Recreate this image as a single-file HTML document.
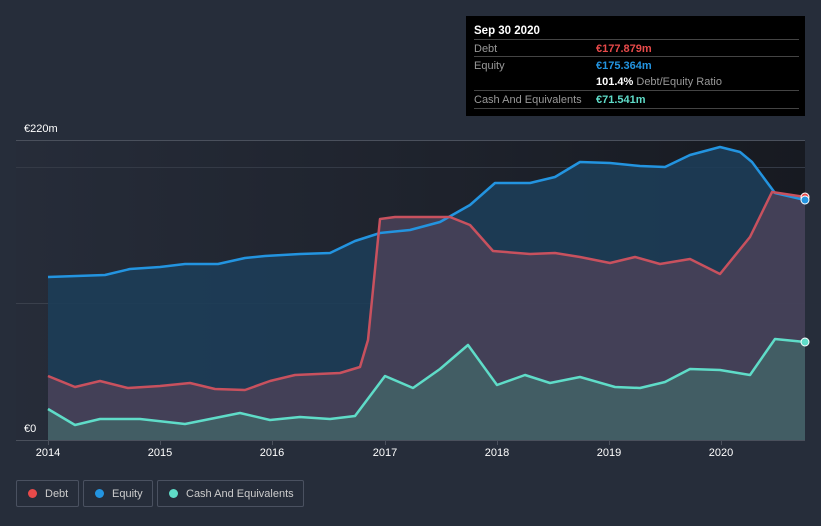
<!DOCTYPE html>
<html><head><meta charset="utf-8"><style>
html,body{margin:0;width:821px;height:526px;overflow:hidden}
body{background:#262d3a;font-family:"Liberation Sans",sans-serif;position:relative}
.tt{position:absolute;left:466px;top:16px;width:339px;height:100px;background:#000;color:#fff;font-size:11px}
.tt .h{position:absolute;left:8px;top:9px;font-weight:bold;font-size:11.5px}
.row{position:absolute;left:8px;width:325px;height:17px;border-top:1px solid #444}
.row span{position:absolute;top:3px;white-space:nowrap}
.lab{left:0;color:#999}
.val{left:122px;font-weight:bold}
.leg{position:absolute;top:480px;height:27px;border:1px solid #4a5160;border-radius:2px;color:#ccc;font-size:11px;line-height:26px;box-sizing:border-box;white-space:nowrap}
.leg i{position:absolute;left:11px;top:8px;width:9px;height:9px;border-radius:50%}
.leg span{position:absolute;left:28px}
.yr{position:absolute;top:447px;color:#fff;font-size:11px;transform:translateX(-50%)}
</style></head><body>
<svg width="821" height="526" style="position:absolute;left:0;top:0">
<defs>
<linearGradient id="bg" x1="0" x2="1" y1="0" y2="0"><stop offset="0" stop-color="#262c39"/><stop offset="1" stop-color="#171a21"/></linearGradient>
</defs>
<rect x="16" y="140" width="789" height="300" fill="url(#bg)"/>
<line x1="16" y1="140.5" x2="805" y2="140.5" stroke="#4a505c"/>
<line x1="16" y1="167.5" x2="805" y2="167.5" stroke="#343a46"/>
<line x1="16" y1="303.5" x2="805" y2="303.5" stroke="#3a404c"/>
<line x1="16" y1="440.5" x2="805" y2="440.5" stroke="#4a505c"/>
<polygon fill="#1d3d58" opacity="0.9" points="48,277 105,275 130,269 160,267 185,264 218,264 245,258 265,256 300,254 330,253 355,241 380,233 410,230 440,222 470,205 495,183 530,183 555,177 580,162 610,163 640,166 665,167 690,155 720,147 740,152 752,162 775,193 805,200 805,440 48,440"/>
<polygon fill="#4a4258" opacity="0.85" points="48,376 75,387 100,381 128,388 160,386 190,383 215,389 245,390 270,381 295,375 340,373 360,367 368,340 380,219 395,217 450,217 470,225 493,251 530,254 555,253 580,257 610,263 635,257 660,264 690,259 720,274 750,237 772,192 805,197 805,440 48,440"/>
<polygon fill="#436166" opacity="0.9" points="48,409 75,425 100,419 140,419 185,424 215,418 240,413 270,420 300,417 330,419 355,416 385,376 413,388 440,369 468,345 497,385 525,375 550,383 580,377 615,387 640,388 665,382 690,369 720,370 750,375 775,339 805,342 805,440 48,440"/>
<polyline fill="none" stroke="#2394e0" stroke-width="2.5" stroke-linejoin="round" points="48,277 105,275 130,269 160,267 185,264 218,264 245,258 265,256 300,254 330,253 355,241 380,233 410,230 440,222 470,205 495,183 530,183 555,177 580,162 610,163 640,166 665,167 690,155 720,147 740,152 752,162 775,193 805,200"/>
<polyline fill="none" stroke="#c8515e" stroke-width="2.5" stroke-linejoin="round" points="48,376 75,387 100,381 128,388 160,386 190,383 215,389 245,390 270,381 295,375 340,373 360,367 368,340 380,219 395,217 450,217 470,225 493,251 530,254 555,253 580,257 610,263 635,257 660,264 690,259 720,274 750,237 772,192 805,197"/>
<polyline fill="none" stroke="#5fdcc8" stroke-width="2.5" stroke-linejoin="round" points="48,409 75,425 100,419 140,419 185,424 215,418 240,413 270,420 300,417 330,419 355,416 385,376 413,388 440,369 468,345 497,385 525,375 550,383 580,377 615,387 640,388 665,382 690,369 720,370 750,375 775,339 805,342"/>
<circle cx="805" cy="197" r="4" fill="#e84a4a" stroke="#fff"/>
<circle cx="805" cy="200" r="4" fill="#2394e0" stroke="#fff"/>
<circle cx="805" cy="342" r="4" fill="#5fdcc8" stroke="#fff"/>
<g stroke="#4a505c"><line x1="48.5" y1="440" x2="48.5" y2="445"/><line x1="160.5" y1="440" x2="160.5" y2="445"/><line x1="272.5" y1="440" x2="272.5" y2="445"/><line x1="385.5" y1="440" x2="385.5" y2="445"/><line x1="497.5" y1="440" x2="497.5" y2="445"/><line x1="609.5" y1="440" x2="609.5" y2="445"/><line x1="721.5" y1="440" x2="721.5" y2="445"/></g>
<text x="24" y="132" fill="#fff" font-size="11" font-family="Liberation Sans">€220m</text>
<text x="24" y="432" fill="#fff" font-size="11" font-family="Liberation Sans">€0</text>
</svg>
<div class="yr" style="left:48px">2014</div><div class="yr" style="left:160px">2015</div><div class="yr" style="left:272px">2016</div><div class="yr" style="left:385px">2017</div><div class="yr" style="left:497px">2018</div><div class="yr" style="left:609px">2019</div><div class="yr" style="left:721px">2020</div>
<div class="tt">
<div class="h">Sep 30 2020</div>
<div class="row" style="top:23px"><span class="lab">Debt</span><span class="val" style="color:#e84a4a">€177.879m</span></div>
<div class="row" style="top:40px"><span class="lab">Equity</span><span class="val" style="color:#2394e0">€175.364m</span></div>
<div class="row" style="top:57px;border-top:none"><span class="val" style="color:#fff">101.4% <b style="color:#999;font-weight:normal">Debt/Equity Ratio</b></span></div>
<div class="row" style="top:74px;border-bottom:1px solid #444"><span class="lab">Cash And Equivalents</span><span class="val" style="color:#5fdcc8">€71.541m</span></div>
</div>
<div class="leg" style="left:16px;width:63px"><i style="background:#e84a4a"></i><span>Debt</span></div>
<div class="leg" style="left:83px;width:70px"><i style="background:#2394e0"></i><span>Equity</span></div>
<div class="leg" style="left:157px;width:147px"><i style="background:#5fdcc8"></i><span>Cash And Equivalents</span></div>
</body></html>
